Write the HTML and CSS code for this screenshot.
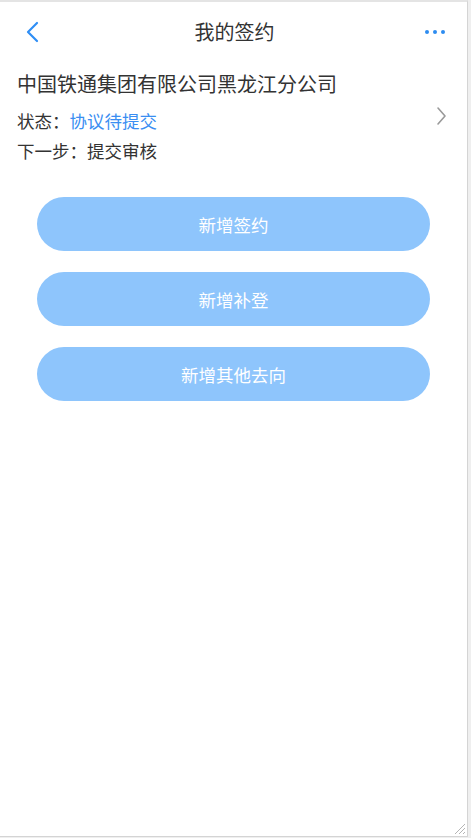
FILE: index.html
```html
<!DOCTYPE html>
<html lang="zh">
<head>
<meta charset="utf-8">
<link rel="stylesheet" href="styles.css">
</head>
<body>
<div class="frame">
  <header class="nav">
    <svg class="back" width="14" height="22" viewBox="0 0 14 22"><path d="M11 2 L2 11 L11 20" fill="none" stroke="#2f8ef5" stroke-width="2.2" stroke-linecap="round" stroke-linejoin="round"/></svg>
    <div class="title">我的签约</div>
    <div class="more"><span></span><span></span><span></span></div>
  </header>
  <section class="info">
    <div class="texts">
      <div class="company">中国铁通集团有限公司黑龙江分公司</div>
      <div class="row">状态：<span class="status">协议待提交</span></div>
      <div class="row">下一步：提交审核</div>
    </div>
    <svg class="arrow" width="12" height="20" viewBox="0 0 12 20"><path d="M2 2 L9 10 L2 18" fill="none" stroke="#9a9a9a" stroke-width="1.6" stroke-linecap="round" stroke-linejoin="round"/></svg>
  </section>
  <div class="actions">
    <button class="btn">新增签约</button>
    <button class="btn">新增补登</button>
    <button class="btn">新增其他去向</button>
  </div>
  <svg class="grip" width="14" height="14" viewBox="0 0 14 14"><path d="M13 3 L3 13 M13 7 L7 13 M13 11 L11 13" stroke="#b5b5b5" stroke-width="1"/></svg>
</div>
</body>
</html>
```

FILE: styles.css
```css
html, body {
  margin: 0;
  padding: 0;
  background: #efefef;
}
body {
  width: 471px;
  height: 838px;
  font-family: "Noto Sans CJK SC", "Noto Sans", sans-serif;
  color: #333;
}
.frame {
  position: relative;
  box-sizing: border-box;
  width: 468px;
  height: 837px;
  background: #fff;
  border-top: 2px solid #e4e4e4;
  border-right: 1px solid #d4d4d4;
  border-bottom: 1px solid #d4d4d4;
}
.nav {
  height: 58px;
  display: grid;
  grid-template-columns: 1fr auto 1fr;
  align-items: center;
  padding: 0 22px 0 26px;
}
.back { display: block; margin-top: 1px; }
.title {
  font-size: 20px;
  color: #333;
  margin-right: 2px;
}
.more {
  justify-self: end;
  display: flex;
  gap: 4px;
  padding-top: 2px;
}
.more span {
  width: 4px;
  height: 4px;
  border-radius: 50%;
  background: #2d8cf0;
}
.info {
  display: flex;
  align-items: center;
  padding: 11px 19px 0 17px;
}
.texts { flex: 1; }
.company {
  font-size: 20px;
  line-height: 26px;
  color: #333;
  margin-bottom: 9px;
}
.row {
  font-size: 17.5px;
  line-height: 30px;
  color: #333;
}
.status { color: #3a8ef2; }
.arrow { display: block; margin-bottom: 6px; }
.actions {
  display: flex;
  flex-direction: column;
  gap: 21px;
  padding: 31px 37px 0 37px;
}
.btn {
  height: 54px;
  border: none;
  border-radius: 27px;
  background: #8ec5fc;
  color: #fff;
  font-family: "Noto Sans CJK SC", "Noto Sans", sans-serif;
  font-size: 17.5px;
  padding: 0;
}
.grip {
  position: absolute;
  right: 1px;
  bottom: 1px;
}
```
